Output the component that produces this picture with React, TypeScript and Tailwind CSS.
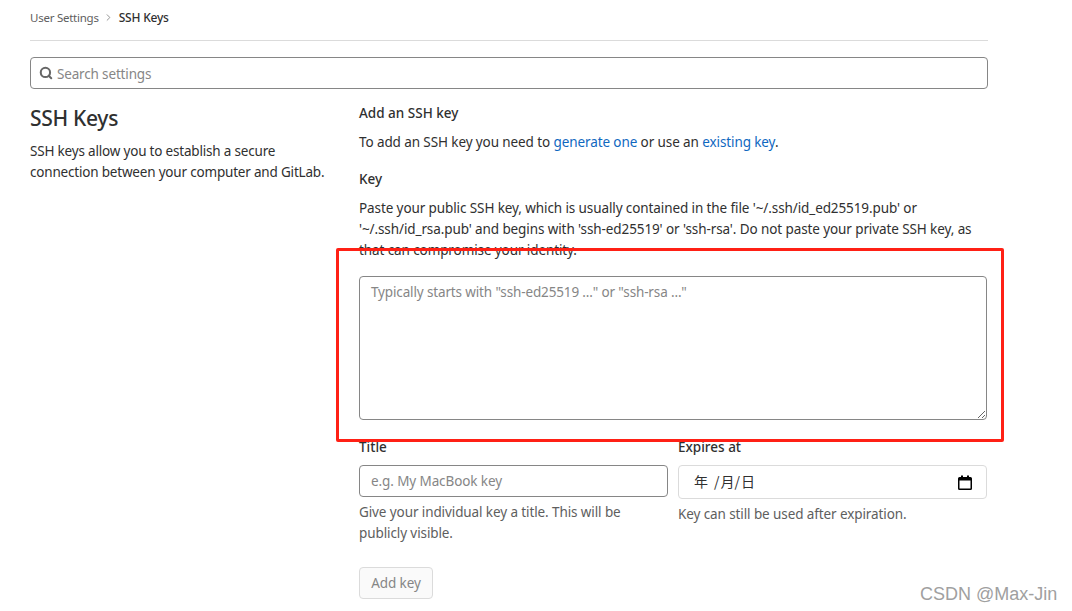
import { Search, ChevronRight } from "lucide-react";

const CJK = "font-['Noto_Sans_CJK_SC',sans-serif]";

function CalendarIcon() {
  return (
    <svg width="14" height="15" viewBox="0 0 14 15" className="text-black">
      <path d="M3 0.5h2v1.5h4V0.5h2V2h1.5A1.5 1.5 0 0 1 14 3.5v10a1.5 1.5 0 0 1-1.5 1.5h-11A1.5 1.5 0 0 1 0 13.5v-10A1.5 1.5 0 0 1 1.500 2H3z M1.500 5.500v8h11v-8z" fill="currentColor" fillRule="evenodd" />
    </svg>
  );
}

export default function App() {
  return (
    <div className="relative h-[611px] w-[1072px] overflow-hidden bg-white font-['Noto_Sans',sans-serif] text-[13.5px] leading-[21px] text-[#303030] tracking-[-0.1px]">
      <div className="ml-[30px] w-[958px]">
        <nav className="flex h-[41px] items-center border-b border-[#dbdbdb] pb-[5px]">
          <span className="text-[11.5px] tracking-[-0.25px] text-[#5e5e5e]">User Settings</span>
          <ChevronRight className="mx-[4px] h-[11px] w-[11px] text-[#8a8a8a]" />
          <span className="ml-[1px] text-[12px] font-medium tracking-[-0.2px] text-[#303030]">SSH Keys</span>
        </nav>

        <div className="mt-[16px] flex h-[32px] items-center rounded-[4px] border border-[#868686] px-[8px]">
          <Search className="h-[14px] w-[14px] shrink-0 text-[#666666]" strokeWidth={3.5} />
          <input
            className="ml-[4px] w-full bg-transparent pt-[2px] tracking-[-0.16px] outline-none placeholder:text-[#868686]"
            placeholder="Search settings"
          />
        </div>

        <div className="flex">
          <section className="w-[329px] shrink-0 pt-[15px]">
            <h2 className="text-[21px] leading-[28px] font-medium tracking-[-0.3px] text-[#303030]">SSH Keys</h2>
            <p className="mt-[9px] w-[300px] tracking-[-0.19px]">
              SSH keys allow you to establish a secure connection between your computer and GitLab.
            </p>
          </section>

          <section className="min-w-0 flex-1 pt-[14px]">
            <h5 className="font-medium tracking-normal">Add an SSH key</h5>
            <p className="mt-[8px]">
              To add an SSH key you need to <a className="text-[#1068bf]">generate one</a> or use an{" "}
              <a className="text-[#1068bf]">existing key</a>.
            </p>
            <label className="mt-[16px] block font-medium tracking-normal">Key</label>
            <p className="mt-[8px]">
              Paste your public SSH key, which is usually contained in the file '~/.ssh/id_ed25519.pub' or
              '~/.ssh/id_rsa.pub' and begins with 'ssh-ed25519' or 'ssh-rsa'. Do not paste your private SSH key, as
              that can compromise your identity.
            </p>
            <textarea
              className="mt-[15px] block h-[144px] w-[628px] rounded-[4px] border border-[#868686] px-[11px] py-[5px] tracking-[-0.14px] outline-none placeholder:text-[#868686]"
              placeholder={'Typically starts with "ssh-ed25519 ..." or "ssh-rsa ..."'}
            />

            <div className="mt-[17px] flex w-[628px] gap-[10px]">
              <div className="w-[309px]">
                <label className="block font-medium tracking-normal">Title</label>
                <input
                  className="mt-[7px] block h-[32px] w-full rounded-[4px] border border-[#868686] px-[11px] outline-none placeholder:text-[#868686]"
                  placeholder="e.g. My MacBook key"
                />
                <p className="mt-[5px] text-[#5e5e5e]">Give your individual key a title. This will be publicly visible.</p>
              </div>
              <div className="w-[309px]">
                <label className="block font-medium tracking-normal">Expires at</label>
                <div className="mt-[7px] flex h-[34px] items-center justify-between rounded-[4px] border border-[#dbdbdb] pr-[14px] pl-[15px]">
                  <span className={`${CJK} flex pb-[1px] text-[14px] tracking-normal`}>
                    <span>年</span>
                    <span className="ml-[6px]">/</span>
                    <span className="ml-[1px]">月</span>
                    <span>/</span>
                    <span className="ml-[1px]">日</span>
                  </span>
                  <CalendarIcon />
                </div>
                <p className="mt-[5px] text-[#5e5e5e]">Key can still be used after expiration.</p>
              </div>
            </div>

            <button className="mt-[23px] block h-[32px] w-[74px] rounded-[4px] border border-[#dbdbdb] bg-[#fafafa] text-[#868686]">
              Add key
            </button>
          </section>
        </div>
      </div>

      <div className="pointer-events-none absolute top-[248px] left-[336px] h-[194px] w-[668px] rounded-[2px] border-[3px] border-[#ff2015]" />
      <div className="pointer-events-none absolute top-[581px] left-[920px] font-['Liberation_Sans',sans-serif] text-[18px] leading-[26px] tracking-normal text-[#a0a0a0]">
        CSDN @Max-Jin
      </div>
    </div>
  );
}
